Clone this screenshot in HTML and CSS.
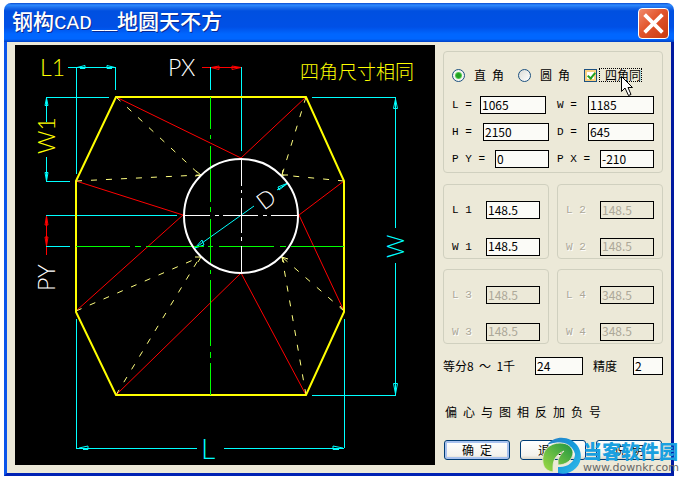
FILE: index.html
```html
<!DOCTYPE html>
<html lang="zh-CN">
<head>
<meta charset="utf-8">
<title>钢构CAD__地圆天不方</title>
<link rel="stylesheet" href="styles.css">
</head>
<body>
<main class="window">
  <header class="titlebar">
    <h1>钢构CAD__地圆天不方</h1>
    <button class="close" type="button" aria-label="关闭">
      <svg viewBox="0 0 31 31"><path d="M6 6L25 25M25 6L6 25"/></svg>
    </button>
  </header>
  <form class="content">
    <svg class="drawing" viewBox="15 45 420 420" role="img" aria-label="地圆天不方">
      <g class="red">
        <path d="M116 97L241 158L306 97M76 181L183 215L76 311M344 181L299 215L344 311M116 395L241 273L306 395"/>
        <path d="M202 67.500H242M46.500 215V255"/>
        <path d="M211 67.500L219 66V69.500ZM241 67.500L232 66V69.500ZM46.500 216L45 225H48ZM46.500 246L45 237H48Z"/>
      </g>
      <g class="dashed">
        <path d="M116 97L200 175"/><path d="M76 181L200 175"/>
        <path d="M306 97L282 175"/><path d="M344 181L282 175"/>
        <path d="M76 311L200 257"/><path d="M116 395L200 257"/>
        <path d="M306 395L282 257"/><path d="M344 311L282 257"/>
      </g>
      <path class="hooks" d="M196 171L201 175L195 176M283 170L282 175L288 175M195 257L201 257L198 262M288 259L282 257L284 263M340 306L344 311"/>
      <g class="cyan">
        <path d="M68 67.500H116M115.500 67V90M76.500 67V174M46 97.500H109M46.500 97V122M46.500 157V181M46 181.500H70M46 215.500H177M46 246.500H70M210.500 67V90M241.500 67V151"/>
        <path d="M312 97.500H396M395.500 97V228M395.500 263V396M312 395.500H396M76.500 319V448M344.500 319V448M76 448.500H197M224 448.500H344M195 248L254 206M277 190L288 183"/>
        <path d="M77 67.500L85 65.500V68.500H80M115 67.500L107 65.500V68.500H112M46.500 98L45 105.500H48ZM46.500 181L45 172.500H48ZM395.500 99L393.500 108.500H397.500ZM395.500 394L393.500 383.500H397.500ZM79 448L88 446V449.500H83M343 448L333 446V449.500H339"/>
        <path d="M195 248L202 240L204 245ZM288 183L278 187L279 190Z"/>
      </g>
      <path class="outline" d="M116 97H306L344 181V312L306 395H116L76 312V181Z"/>
      <path class="green" d="M210.500 97V129M210.500 135V139M210.500 146V202M210.500 207V212M210.500 219V264M210.500 270V274M210.500 280V346M210.500 352V358M210.500 363V395M76 246.500H130M135 246.500H141M146 246.500H204M208 246.500H213M219 246.500H274M280 246.500H286M291 246.500H344"/>
      <circle class="circle" cx="241" cy="216" r="57"/>
      <path class="axis" d="M241.500 159V186M241.500 190V193M241.500 198V233M241.500 237V241M241.500 246V273M184 215.500H210M215 215.500H219M223 215.500H258M263 215.500H267M271 215.500H298"/>
      <g class="marks">
        <text class="y" x="40" y="76">L1</text>
        <text class="w" x="168" y="76">PX</text>
        <text class="y" transform="translate(55 154) rotate(-90)">W1</text>
        <text class="w" transform="translate(55 291) rotate(-90)">PY</text>
        <text class="w" transform="translate(264 211) rotate(-37)">D</text>
        <text class="c" transform="translate(404 258) rotate(-90)">W</text>
        <text class="c tall" x="201" y="459">L</text>
        <text class="y note" x="300" y="79">四角尺寸相同</text>
      </g>
    </svg>

    <div class="panel">
      <fieldset class="group main">
        <div class="choices">
          <label class="choice"><input type="radio" name="corner" checked>直&#8194;角</label>
          <label class="choice"><input type="radio" name="corner">圆&#8194;角</label>
          <label class="same"><input type="checkbox" checked><span>四角同</span></label>
          <svg class="pointer" viewBox="0 0 12 20"><path d="M.5.500V15.500L4 12L7.500 19.500L10 18.500L7 11.500H11.500Z"/></svg>
        </div>
        <div class="pairs">
          <div class="field"><label class="s" for="l">L =</label><input id="l" value="1065"></div>
          <div class="field"><label class="m" for="w">W =</label><input id="w" value="1185"></div>
          <div class="field"><label class="m" for="h">H =</label><input id="h" value="2150"></div>
          <div class="field"><label class="m" for="d">D =</label><input id="d" value="645"></div>
          <div class="field"><label class="x" for="py">P Y =</label><input class="short" id="py" value="0"></div>
          <div class="field"><label class="x" for="px">P X =</label><input class="short" id="px" value="-210"></div>
        </div>
      </fieldset>
      <div class="corners">
        <fieldset class="group corner">
          <div class="field"><label for="l1">L 1</label><input class="short" id="l1" value="148.5"></div>
          <div class="field"><label for="w1">W 1</label><input class="short" id="w1" value="148.5"></div>
        </fieldset>
        <fieldset class="group corner" disabled>
          <div class="field"><label for="l2">L 2</label><input class="short" id="l2" value="148.5"></div>
          <div class="field"><label for="w2">W 2</label><input class="short" id="w2" value="148.5"></div>
        </fieldset>
        <fieldset class="group corner" disabled>
          <div class="field"><label for="l3">L 3</label><input class="short" id="l3" value="148.5"></div>
          <div class="field"><label for="w3">W 3</label><input class="short" id="w3" value="148.5"></div>
        </fieldset>
        <fieldset class="group corner" disabled>
          <div class="field"><label for="l4">L 4</label><input class="short" id="l4" value="348.5"></div>
          <div class="field"><label for="w4">W 4</label><input class="short" id="w4" value="348.5"></div>
        </fieldset>
      </div>
      <div class="divide">
        <span class="pair"><label for="n">等分8&nbsp; ～ &nbsp;1千</label><input class="count" id="n" value="24"></span>
        <span class="pair"><label for="p">精度</label><input class="digits" id="p" value="2"></span>
      </div>
      <p class="hint">偏&#8194;心&#8194;与&#8194;图&#8194;相&#8194;反&#8194;加&#8194;负&#8194;号</p>
      <div class="buttons">
        <button class="default" type="button">确&#8194;定</button>
        <button type="button">退&#8194;出</button>
        <button type="button">说&#8194;明</button>
      </div>
    </div>
  </form>
  <div class="brand">
    <svg viewBox="0 0 40 38">
      <defs>
        <linearGradient id="blue" x1="0" y1="0" x2="1" y2="1"><stop offset="0" stop-color="#2b7fc4"/><stop offset=".5" stop-color="#159bdc"/><stop offset="1" stop-color="#38bdea"/></linearGradient>
        <linearGradient id="leaf" x1="1" y1="0" x2="0" y2="1"><stop offset="0" stop-color="#1d9440"/><stop offset="1" stop-color="#a3dc45"/></linearGradient>
      </defs>
      <path d="M5 8C11 0 21-1 29 3C40 9 42 23 34 31C29 36 22 38 16 36V30C25 31 33 25 33 17C31 7 17 2 5 8Z" fill="url(#blue)"/>
      <path d="M1 26C-1 13 8 6 18 6C26 6 30 10 31 15C31 23 24 28 16 28V23C17 20 19 17 22 14C15 17 11 22 11 30V35C5 34 2 31 1 26Z" fill="url(#leaf)" stroke="#ece9d8" stroke-width=".8"/>
    </svg>
    <div class="brand-text"><strong>当客软件园</strong><span>www.downkr.com</span></div>
  </div>
</main>
</body>
</html>
```
FILE: styles.css
```css
* { box-sizing: border-box; }
body {
  margin: 0;
  padding: 3px 5px 3px 4px;
  background: #fff;
  color: #000;
  font: 12px/14px "Noto Sans CJK SC", sans-serif;
}
.window { position: relative; }
.titlebar {
  display: flex;
  align-items: center;
  justify-content: space-between;
  height: 39px;
  padding: 0 5px 0 8px;
  border-radius: 7px 7px 0 0;
  background: linear-gradient(#0a49cf 0, #2e8bff 2px, #1868e8 5px, #0050e0 8px, #0050e6 24px, #0066ff 31px, #0066ff 36px, #0040c4 39px);
}
h1 {
  margin: 0;
  padding-top: 2px;
  color: #fff;
  font: 500 21px/28px "Liberation Mono", "Noto Sans CJK SC", monospace;
  text-shadow: 1px 1px #0a2a90;
}
.close {
  width: 31px;
  height: 31px;
  margin-top: 2px;
  padding: 0;
  border: 1px solid #fff;
  border-radius: 4px;
  background: linear-gradient(135deg, #f08a6c, #e2542c 45%, #c83a10);
}
.close svg { display: block; width: 100%; }
.close path { stroke: #fff; stroke-width: 4; }
.content {
  display: grid;
  grid-template-columns: minmax(0, 1fr) 220px;
  gap: 8px;
  padding: 3px 8px 8px;
  border: solid #0040e0;
  border-width: 0 3px 3px;
  border-color: #0040e0 #0019a0 #0022b4 #0a54ea;
  background: #ece9d8;
}
.drawing { display: block; width: 100%; background: #000; fill: none; }
.red { stroke: #f00; }
.cyan { stroke: #0ff; }
.dashed { stroke: #ffff80; stroke-dasharray: 6 9; }
.hooks { stroke: #ffff80; }
.outline { stroke: #ff0; stroke-width: 2; }
.green { stroke: #0f0; }
.circle { stroke: #fff; stroke-width: 2; }
.axis { stroke: #fff; }
.marks { font: 300 23px Lato, sans-serif; }
.tall { font-size: 28px; }
.note { font: 300 19px "Noto Sans CJK SC", sans-serif; }
.y { fill: #ff0; }
.w { fill: #fff; }
.c { fill: #0ff; }

.panel { padding-top: 6px; }
.group { min-width: 0; margin: 0; border: 1px solid #d0d0bf; border-radius: 4px; }
.main { height: 122px; padding: 16px 0 0 8px; }
.choices { position: relative; display: flex; align-items: center; height: 14px; }
.choice { display: flex; align-items: center; gap: 9px; width: 66px; white-space: nowrap; }
.same { display: flex; align-items: center; gap: 2px; }
.same span { padding: 0 1px 0 6px; outline: 1px dotted #000; outline-offset: -1px; line-height: 14px; white-space: nowrap; }
input { font: inherit; color: inherit; margin: 0; border-radius: 0; }
input[type="radio"], input[type="checkbox"] {
  appearance: none;
  flex: none;
  width: 13px;
  height: 13px;
  border: 1px solid #1c5180;
}
input[type="radio"] { border-radius: 50%; background: linear-gradient(135deg, #dcdcd7, #fff); }
input[type="radio"]:checked { background: radial-gradient(circle, #21a121 0 2px, #55c855 3px, #f4f4f0 4px); }
input[type="checkbox"] {
  position: relative;
  background: #fff;
  box-shadow: inset 0 0 0 2px #fad080;
}
input[type="checkbox"]::after {
  content: "";
  position: absolute;
  left: 4px;
  top: 1px;
  width: 3px;
  height: 6px;
  border: solid #21a121;
  border-width: 0 2px 2px 0;
  transform: rotate(40deg);
}
.pointer { position: absolute; left: 169px; top: 8px; width: 12px; height: 20px; fill: #fff; stroke: #000; }
.pairs { display: grid; grid-template-columns: 1fr 1fr; row-gap: 9px; padding-top: 14px; }
.field { display: flex; align-items: center; }
.field label { flex: none; font: 11px/18px "Liberation Mono", monospace; white-space: nowrap; }
.s { width: 28px; }
.m { width: 31px; }
.x { width: 43px; }
.field input, .divide input {
  width: 66px;
  height: 18px;
  padding: 0 1px 2px;
  border: 1px solid #000;
  background: #fbfbf7;
}
.field .short { width: 54px; }
.corners { display: grid; grid-template-columns: 1fr 1fr; gap: 10px 8px; padding-top: 11px; }
.corner { display: grid; gap: 18px; height: 75px; padding: 16px 8px 2px; }
.corner label { width: 34px; }
.corner:disabled { color: #aca899; }
.corner:disabled label { text-shadow: 1px 1px #fff; }
.corner:disabled input { background: transparent; }
.divide { display: flex; align-items: center; justify-content: space-between; padding-top: 13px; }
.pair { display: flex; align-items: center; gap: 16px; }
.divide label { white-space: nowrap; }
.pair .count { width: 48px; margin-left: 4px; }
.pair .digits { width: 30px; }
.hint { margin: 30px 0 0 2px; white-space: nowrap; }
.buttons { display: flex; gap: 10px; padding: 21px 1px 0; }
.buttons button {
  flex: 1;
  height: 20px;
  padding: 0;
  border: 1px solid #003c74;
  border-radius: 3px;
  background: linear-gradient(#fff, #f3f2ec 80%, #d9d5c8);
  color: #000;
  font: inherit;
}
.buttons .default { box-shadow: inset 0 0 0 2px #a9c2ee; }
.brand { position: absolute; right: -5px; bottom: 1px; display: flex; gap: 1px; }
.brand svg { width: 40px; height: 38px; }
.brand-text { display: flex; flex-direction: column; padding-top: 4px; }
.brand strong {
  color: #1aa0e0;
  font: 900 19px/20px "Noto Sans CJK SC", sans-serif;
  white-space: nowrap;
}
.brand span { color: #666; font: 11px/13px "DejaVu Sans", sans-serif; }
```
